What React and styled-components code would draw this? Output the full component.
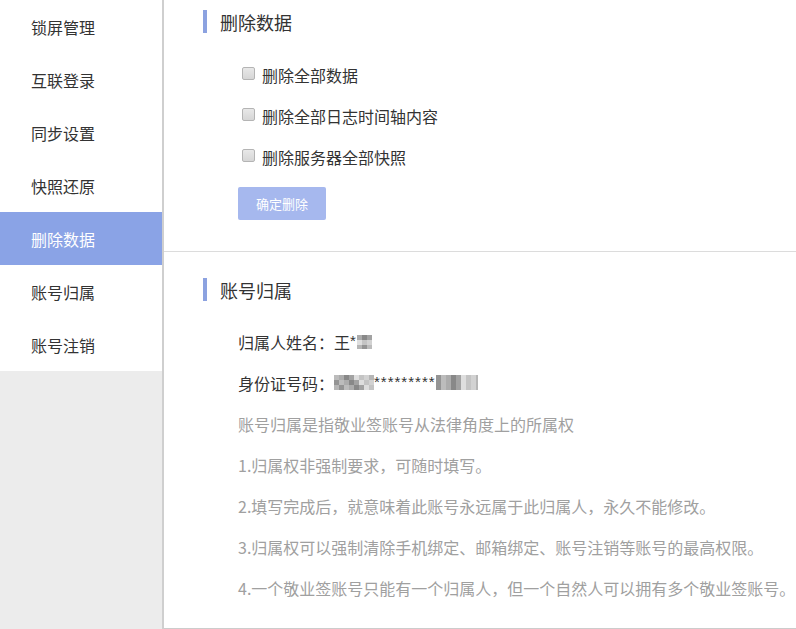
import React from "react";
import styled, { createGlobalStyle } from "styled-components";

const Global = createGlobalStyle`
  html, body { margin: 0; padding: 0; background: #fff; overflow: hidden; }
  body { font-family: "Microsoft YaHei", "Noto Sans CJK SC", "Noto Sans", sans-serif; }
`;

const Page = styled.div`
  display: flex;
  width: 796px;
  height: 629px;
`;

const Sidebar = styled.nav`
  width: 162px;
  flex: none;
  background: #ececec;
  border-right: 2px solid #cfcfcf;
  display: flex;
  flex-direction: column;
`;

const MenuList = styled.div`
  background: #fff;
  display: flex;
  flex-direction: column;
`;

const MenuItem = styled.div`
  height: 53px;
  display: flex;
  align-items: center;
  padding-left: 31px;
  font-size: 16px;
  color: ${(p) => (p.$active ? "#fff" : "#333")};
  background: ${(p) => (p.$active ? "#8aa3e6" : "#fff")};
`;

const Main = styled.main`
  flex: 1;
  display: flex;
  flex-direction: column;
  min-width: 0;
`;

const Section = styled.section`
  padding: ${(p) => p.$pt}px 0 ${(p) => p.$pb}px 39px;
  border-bottom: 1px solid ${(p) => p.$line};
`;

const Heading = styled.h2`
  margin: 0;
  height: 23px;
  display: flex;
  align-items: center;
  gap: 13px;
  font-size: 18px;
  font-weight: normal;
  color: #333;
  &::before {
    content: "";
    width: 4px;
    height: 23px;
    background: #8ca2e0;
  }
`;

const CheckList = styled.div`
  margin: 21px 0 0 39px;
  display: flex;
  flex-direction: column;
`;

const CheckRow = styled.label`
  height: 41px;
  display: flex;
  align-items: center;
  gap: 7px;
  font-size: 16px;
  color: #333;
`;

const Box = styled.span`
  width: 11px;
  height: 11px;
  border: 1px solid #b4b4b4;
  border-radius: 2px;
  background: linear-gradient(#e8e8e8, #d6d6d6);
  margin-top: -3px;
`;

const Button = styled.button`
  margin: 10px 0 0 35px;
  width: 88px;
  height: 33px;
  border: none;
  border-radius: 2px;
  background: #a6b8ee;
  color: #fff;
  font-family: inherit;
  font-size: 13px;
  padding: 0;
`;

const InfoList = styled.div`
  margin: 20px 0 0 35px;
  display: flex;
  flex-direction: column;
`;

const InfoLine = styled.div`
  height: 41px;
  display: flex;
  align-items: center;
  font-size: 16px;
  white-space: nowrap;
  color: ${(p) => (p.$muted ? "#a0a0a0" : "#333")};
`;

const Stars = styled.span`
  font-family: "Liberation Sans", sans-serif;
  font-size: 15px;
  letter-spacing: 1px;
  margin-top: -3px;
`;

const MosaicSvg = styled.svg`
  display: block;
  flex: none;
`;

const shades = ["#c4c4c4", "#a2a2a2", "#b6b6b6", "#949494", "#d2d2d2", "#acacac", "#888888", "#bcbcbc", "#dedede"];

function Mosaic({ w, h, seed }) {
  const cell = 5;
  const cells = [];
  let s = seed;
  for (let y = 0; y < h; y += cell) {
    for (let x = 0; x < w; x += cell) {
      s = (s * 9301 + 49297) % 233280;
      cells.push(
        <rect key={`${x}-${y}`} x={x} y={y} width={cell} height={cell} fill={shades[s % shades.length]} />
      );
    }
  }
  return (
    <MosaicSvg width={w} height={h} viewBox={`0 0 ${w} ${h}`}>
      {cells}
    </MosaicSvg>
  );
}

const menu = ["锁屏管理", "互联登录", "同步设置", "快照还原", "删除数据", "账号归属", "账号注销"];

const notes = [
  "账号归属是指敬业签账号从法律角度上的所属权",
  "1.归属权非强制要求，可随时填写。",
  "2.填写完成后，就意味着此账号永远属于此归属人，永久不能修改。",
  "3.归属权可以强制清除手机绑定、邮箱绑定、账号注销等账号的最高权限。",
  "4.一个敬业签账号只能有一个归属人，但一个自然人可以拥有多个敬业签账号。",
];

export default function App() {
  return (
    <>
      <Global />
      <Page>
        <Sidebar>
          <MenuList>
            {menu.map((m) => (
              <MenuItem key={m} $active={m === "删除数据"}>
                {m}
              </MenuItem>
            ))}
          </MenuList>
        </Sidebar>
        <Main>
          <Section $pt={10} $pb={31} $line="#dcdcdc">
            <Heading>删除数据</Heading>
            <CheckList>
              {["删除全部数据", "删除全部日志时间轴内容", "删除服务器全部快照"].map((t) => (
                <CheckRow key={t}>
                  <Box />
                  {t}
                </CheckRow>
              ))}
            </CheckList>
            <Button>确定删除</Button>
          </Section>
          <Section $pt={26} $pb={20} $line="#cccccc">
            <Heading>账号归属</Heading>
            <InfoList>
              <InfoLine>
                归属人姓名：王<Stars>*</Stars>
                <Mosaic w={15} h={14} seed={7} />
              </InfoLine>
              <InfoLine>
                身份证号码：
                <Mosaic w={40} h={15} seed={3} />
                <Stars>*********</Stars>
                <Mosaic w={42} h={15} seed={11} />
              </InfoLine>
              {notes.map((n) => (
                <InfoLine key={n} $muted>
                  {n}
                </InfoLine>
              ))}
            </InfoList>
          </Section>
        </Main>
      </Page>
    </>
  );
}
